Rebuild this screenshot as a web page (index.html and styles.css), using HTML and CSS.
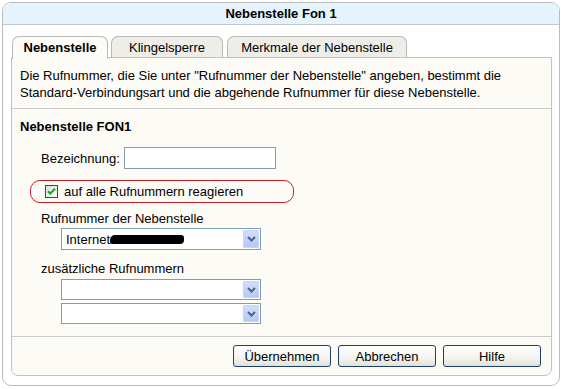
FILE: index.html
```html
<!DOCTYPE html>
<html lang="de">
<head>
<meta charset="utf-8">
<title>Nebenstelle Fon 1</title>
<link rel="stylesheet" href="styles.css">
</head>
<body>
<div class="frame">
  <div class="header">Nebenstelle Fon 1</div>
  <div class="body">
    <div class="tabs">
      <div class="tab active">Nebenstelle</div>
      <div class="tab t2">Klingelsperre</div>
      <div class="tab t3">Merkmale der Nebenstelle</div>
    </div>
    <div class="panel">
      <p class="desc">Die Rufnummer, die Sie unter "Rufnummer der Nebenstelle" angeben, bestimmt die Standard-Verbindungsart und die abgehende Rufnummer für diese Nebenstelle.</p>
      <div class="section">
        <div class="section-title">Nebenstelle FON1</div>
        <div class="row-name">
          <label class="lbl">Bezeichnung:</label>
          <input class="text" type="text">
        </div>
        <div class="highlight">
          <span class="check">
            <svg width="9" height="9" viewBox="0 0 9 9"><path d="M1 4.2 L3.3 6.5 L8 1.8" fill="none" stroke="#21a121" stroke-width="2"/></svg>
          </span>
          <span>auf alle Rufnummern reagieren</span>
        </div>
        <div class="field-label">Rufnummer der Nebenstelle</div>
        <div class="select first">
          <span class="value">Internet<span class="redact"></span></span>
          <span class="arrow"><svg width="9" height="6" viewBox="0 0 9 6"><path d="M1 1 L4.5 4.5 L8 1" fill="none" stroke="#4d6185" stroke-width="2"/></svg></span>
        </div>
        <div class="field-label extra">zusätzliche Rufnummern</div>
        <div class="select">
          <span class="value"></span>
          <span class="arrow"><svg width="9" height="6" viewBox="0 0 9 6"><path d="M1 1 L4.5 4.5 L8 1" fill="none" stroke="#4d6185" stroke-width="2"/></svg></span>
        </div>
        <div class="select second">
          <span class="value"></span>
          <span class="arrow"><svg width="9" height="6" viewBox="0 0 9 6"><path d="M1 1 L4.5 4.5 L8 1" fill="none" stroke="#4d6185" stroke-width="2"/></svg></span>
        </div>
      </div>
      <div class="footer">
        <button class="btn">Übernehmen</button>
        <button class="btn">Abbrechen</button>
        <button class="btn">Hilfe</button>
      </div>
    </div>
  </div>
</div>
</body>
</html>
```
FILE: styles.css
```css
html, body {
  margin: 0;
  padding: 0;
  background: #ffffff;
}
body {
  font-family: "Liberation Sans", Arial, sans-serif;
  font-size: 13px;
  color: #000;
}
.frame {
  margin: 2px 3px 0 2px;
  height: 384px;
  box-sizing: border-box;
  border: 1px solid #bcbcbc;
  border-radius: 9px;
  display: flex;
  flex-direction: column;
  overflow: hidden;
}
.header {
  height: 21px;
  line-height: 21px;
  background: #e5f4fc;
  border-bottom: 1px solid #c4c8ca;
  text-align: center;
  font-weight: bold;
}
.body {
  flex: 1;
  display: flex;
  flex-direction: column;
  padding: 11px 7px 9px 8px;
}
.tabs {
  display: flex;
  gap: 3px;
  padding-left: 1px;
  height: 22px;
  position: relative;
  z-index: 1;
  margin-bottom: -1px;
}
.tab {
  box-sizing: border-box;
  height: 22px;
  border: 1px solid #b8b8b8;
  border-radius: 7px 7px 0 0;
  background: #eeede8;
  text-align: center;
  line-height: 21px;
  width: 96px;
  border-bottom: 1px solid #c2c2c2;
}
.tab.active {
  background: #fdfbf6;
  font-weight: bold;
  border-bottom-color: #fdfbf6;
  height: 23px;
}
.tab.t2 { width: 112px; }
.tab.t3 { width: 180px; margin-left: 1px; }
.panel {
  flex: 1;
  display: flex;
  flex-direction: column;
  border: 1px solid #c2c2c2;
  background: #fdfbf6;
  border-radius: 0 0 7px 7px;
}
.desc {
  margin: 0;
  padding: 9px 8px 7px 8px;
  line-height: 17px;
  border-bottom: 1px solid #cbcbcb;
}
.section {
  padding: 9px 8px 0 8px;
  display: flex;
  flex-direction: column;
  align-items: flex-start;
}
.section-title {
  font-weight: bold;
  line-height: 17px;
}
.row-name {
  margin-top: 12px;
  display: flex;
  align-items: center;
  padding-left: 21px;
  height: 22px;
}
.lbl { margin-right: 4px; }
.text {
  box-sizing: border-box;
  width: 152px;
  height: 22px;
  border: 1px solid #7f9db9;
  background: #fff;
  margin: 0;
  padding: 0 3px;
}
.highlight {
  margin-top: 11px;
  margin-left: 10px;
  box-sizing: border-box;
  width: 264px;
  height: 23px;
  border: 1px solid #c8202a;
  border-radius: 10px;
  display: flex;
  align-items: center;
  padding-left: 14px;
}
.check {
  box-sizing: border-box;
  width: 13px;
  height: 13px;
  border: 1px solid #1c5180;
  background: linear-gradient(135deg, #dcdcd7, #fcfcfb);
  display: flex;
  align-items: center;
  justify-content: center;
  margin-right: 6px;
}
.field-label {
  margin-top: 7px;
  padding-left: 21px;
  line-height: 17px;
}
.field-label.extra { margin-top: 10px; }
.select {
  margin-top: 2px;
  margin-left: 41px;
  box-sizing: border-box;
  width: 200px;
  height: 21px;
  border: 1px solid #7f9db9;
  background: #fff;
  display: flex;
  align-items: center;
  justify-content: space-between;
  padding: 1px;
}
.select.first { height: 22px; margin-top: 1px; }
.select.second { margin-top: 3px; }
.value {
  padding-left: 3px;
  display: flex;
  align-items: center;
}
.redact {
  display: inline-block;
  width: 74px;
  height: 9px;
  background: #000;
  border-radius: 5px 3px 4px 2px;
}
.arrow {
  box-sizing: border-box;
  width: 16px;
  height: 100%;
  background: linear-gradient(180deg, #d2ddfb, #b5c8f5);
  border: 1px solid #c5d4f7;
  border-radius: 1px;
  display: flex;
  align-items: center;
  justify-content: center;
}
.footer {
  margin-top: auto;
  border-top: 1px solid #cbcbcb;
  height: 39px;
  box-sizing: border-box;
  display: flex;
  justify-content: flex-end;
  align-items: center;
  gap: 7px;
  padding-right: 10px;
}
.btn {
  box-sizing: border-box;
  width: 98px;
  height: 22px;
  border: 1px solid #1f3f6b;
  border-radius: 3px;
  background: linear-gradient(180deg, #ffffff 0%, #f4f3ee 60%, #e3e0d6 100%);
  font-family: "Liberation Sans", Arial, sans-serif;
  font-size: 13px;
  color: #000;
  padding: 0;
  margin: 0;
}
```
